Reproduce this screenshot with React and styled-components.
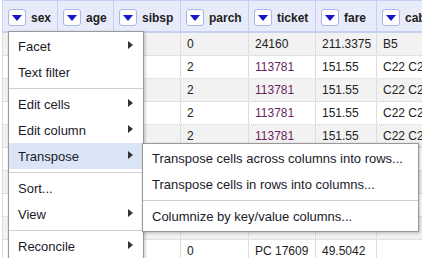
import React from 'react';
import styled, { createGlobalStyle } from 'styled-components';

const GlobalStyle = createGlobalStyle`
	body {
		margin: 0;
		background: #fff;
		font-family: "Liberation Sans", Arial, sans-serif;
		overflow: hidden;
	}
`;

const columns = [
	{ name: 'sex', width: 55 },
	{ name: 'age', width: 56 },
	{ name: 'sibsp', width: 67 },
	{ name: 'parch', width: 68 },
	{ name: 'ticket', width: 67 },
	{ name: 'fare', width: 61 },
	{ name: 'cabin', width: 80 },
];

const rows = [
	['female', '29', '0', '0', '24160', '211.3375', 'B5'],
	['male', '0.9167', '1', '2', '113781', '151.55', 'C22 C26'],
	['female', '2', '1', '2', '113781', '151.55', 'C22 C26'],
	['male', '30', '1', '2', '113781', '151.55', 'C22 C26'],
	['female', '25', '1', '2', '113781', '151.55', 'C22 C26'],
	['male', '48', '0', '0', '19952', '26.55', 'E12'],
	['female', '63', '1', '0', '13502', '77.9583', 'D7'],
	['male', '39', '0', '0', '112050', '0', 'A36'],
	['female', '53', '2', '0', '11769', '51.4792', 'C101'],
	['male', '71', '0', '0', 'PC 17609', '49.5042', ''],
];

const Page = styled.div`
	position: relative;
	width: 422px;
	height: 258px;
	overflow: hidden;
`;

const Table = styled.div`
	display: flex;
	flex-direction: column;
	padding-left: 2px;
`;

const HeaderRow = styled.div`
	display: flex;
	height: 33px;
	background: #e8ecfa;
	border-bottom: 2px solid #c5d0f3;
	border-top: 1px solid #c5d0f3;
	box-sizing: border-box;
`;

const HeaderCell = styled.div`
	flex: 0 0 ${(p) => p.$width}px;
	display: flex;
	align-items: center;
	gap: 5px;
	padding: 3px 0 0 5px;
	box-sizing: border-box;
	border-left: 1px solid #c5d0f3;
	font-size: 12px;
	font-weight: bold;
	color: #222;
	white-space: nowrap;
	overflow: hidden;
`;

const DropButton = styled.span`
	flex: 0 0 auto;
	width: 18px;
	height: 17px;
	box-sizing: border-box;
	background: #fff;
	border: 1px solid #a9b6e6;
	border-radius: 3px;
	display: flex;
	align-items: center;
	justify-content: center;

	&::after {
		content: '';
		border-left: 5px solid transparent;
		border-right: 5px solid transparent;
		border-top: 6px solid #1616c8;
	}
`;

const Row = styled.div`
	display: flex;
	height: 23px;
	background: ${(p) => (p.$odd ? '#fff' : '#f2f2f2')};
	border-bottom: 1px dotted #cfcfcf;
	box-sizing: border-box;
`;

const Cell = styled.div`
	flex: 0 0 ${(p) => p.$width}px;
	display: flex;
	align-items: center;
	padding-left: 6px;
	box-sizing: border-box;
	border-left: 1px solid #ddd;
	font-size: 12px;
	color: ${(p) => (p.$link ? '#6a1f5e' : '#222')};
	white-space: nowrap;
	overflow: hidden;
`;

const Menu = styled.div`
	position: absolute;
	left: ${(p) => p.$left}px;
	top: ${(p) => p.$top}px;
	width: ${(p) => p.$width}px;
	background: #fff;
	border: 1px solid #999;
	box-shadow: 1px 1px 3px rgba(0, 0, 0, 0.25);
	padding: 1px 0 2px;
	box-sizing: border-box;
	font-size: 13px;
	color: #1a1a2a;
`;

const MenuItem = styled.div`
	position: relative;
	height: 26px;
	display: flex;
	align-items: center;
	padding-left: 9px;
	background: ${(p) => (p.$active ? '#dae6f5' : 'transparent')};
	white-space: nowrap;

	${(p) =>
		p.$sub &&
		`
		&::after {
			content: '';
			position: absolute;
			right: 10px;
			top: 8px;
			border-left: 5px solid #333;
			border-top: 4.5px solid transparent;
			border-bottom: 4.5px solid transparent;
		}
	`}
`;

const Separator = styled.div`
	height: 6px;
	display: flex;
	align-items: center;

	&::after {
		content: '';
		flex: 1;
		height: 1px;
		background: #cfcfcf;
	}
`;

export default function App() {
	return (
		<Page>
			<GlobalStyle />
			<Table>
				<HeaderRow>
					{columns.map((c) => (
						<HeaderCell key={c.name} $width={c.width}>
							<DropButton />
							{c.name}
						</HeaderCell>
					))}
				</HeaderRow>
				{rows.map((r, i) => (
					<Row key={i} $odd={i % 2 === 1}>
						{r.map((v, j) => (
							<Cell
								key={j}
								$width={columns[j].width}
								$link={j === 4 && v === '113781'}
							>
								{v}
							</Cell>
						))}
					</Row>
				))}
			</Table>

			<Menu $left={8} $top={31} $width={136}>
				<MenuItem $sub>Facet</MenuItem>
				<MenuItem>Text filter</MenuItem>
				<Separator />
				<MenuItem $sub>Edit cells</MenuItem>
				<MenuItem $sub>Edit column</MenuItem>
				<MenuItem $sub $active>Transpose</MenuItem>
				<Separator />
				<MenuItem>Sort...</MenuItem>
				<MenuItem $sub>View</MenuItem>
				<Separator />
				<MenuItem $sub>Reconcile</MenuItem>
			</Menu>

			<Menu $left={142} $top={143} $width={277}>
				<MenuItem>Transpose cells across columns into rows...</MenuItem>
				<MenuItem>Transpose cells in rows into columns...</MenuItem>
				<Separator />
				<MenuItem>Columnize by key/value columns...</MenuItem>
			</Menu>
		</Page>
	);
}
